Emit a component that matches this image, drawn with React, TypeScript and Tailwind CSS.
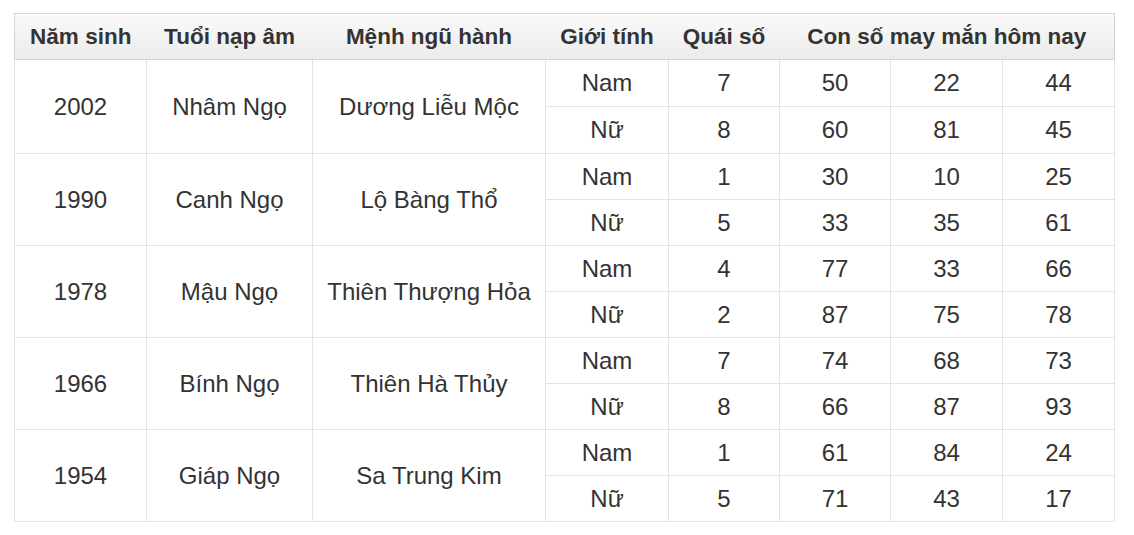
const rows = [
  { year: '2002', tuoi: 'Nhâm Ngọ', menh: 'Dương Liễu Mộc', nam: ['7', '50', '22', '44'], nu: ['8', '60', '81', '45'] },
  { year: '1990', tuoi: 'Canh Ngọ', menh: 'Lộ Bàng Thổ', nam: ['1', '30', '10', '25'], nu: ['5', '33', '35', '61'] },
  { year: '1978', tuoi: 'Mậu Ngọ', menh: 'Thiên Thượng Hỏa', nam: ['4', '77', '33', '66'], nu: ['2', '87', '75', '78'] },
  { year: '1966', tuoi: 'Bính Ngọ', menh: 'Thiên Hà Thủy', nam: ['7', '74', '68', '73'], nu: ['8', '66', '87', '93'] },
  { year: '1954', tuoi: 'Giáp Ngọ', menh: 'Sa Trung Kim', nam: ['1', '61', '84', '24'], nu: ['5', '71', '43', '17'] },
];

const td = 'border border-[#e3e3e3] text-center align-middle p-0 text-[24px]';
const th = 'border-y border-[#d4d4d4] text-center align-middle h-[46px] p-0 font-bold text-[22.5px]';

export default function App() {
  return (
    <div className="min-h-screen bg-white pt-[13px] px-[14px]" style={{ fontFamily: '"Liberation Sans", Arial, sans-serif' }}>
      <table className="w-[1100px] table-fixed border-collapse text-[#333]">
        <colgroup>
          <col className="w-[132px]" />
          <col className="w-[166px]" />
          <col className="w-[233px]" />
          <col className="w-[123px]" />
          <col className="w-[111px]" />
          <col className="w-[111px]" />
          <col className="w-[112px]" />
          <col className="w-[112px]" />
        </colgroup>
        <thead>
          <tr className="bg-gradient-to-b from-[#fafafa] to-[#ebebeb]">
            <th className={`${th} border-l`}>Năm sinh</th>
            <th className={th}>Tuổi nạp âm</th>
            <th className={th}>Mệnh ngũ hành</th>
            <th className={th}>Giới tính</th>
            <th className={th}>Quái số</th>
            <th className={`${th} border-r`} colSpan={3}>Con số may mắn hôm nay</th>
          </tr>
        </thead>
        <tbody>
          {rows.map((r, idx) => {
            // first group is one pixel taller per row in the reference
            const h = idx === 0 ? 'h-[47px]' : 'h-[46px]';
            return (
              <>
                <tr key={r.year + 'a'}>
                  <td className={`${td} ${h}`} rowSpan={2}>{r.year}</td>
                  <td className={`${td} ${h}`} rowSpan={2}>{r.tuoi}</td>
                  <td className={`${td} ${h}`} rowSpan={2}>{r.menh}</td>
                  <td className={`${td} ${h}`}>Nam</td>
                  {r.nam.map((v, i) => (
                    <td key={i} className={`${td} ${h}`}>{v}</td>
                  ))}
                </tr>
                <tr key={r.year + 'b'}>
                  <td className={`${td} ${h}`}>Nữ</td>
                  {r.nu.map((v, i) => (
                    <td key={i} className={`${td} ${h}`}>{v}</td>
                  ))}
                </tr>
              </>
            );
          })}
        </tbody>
      </table>
    </div>
  );
}
